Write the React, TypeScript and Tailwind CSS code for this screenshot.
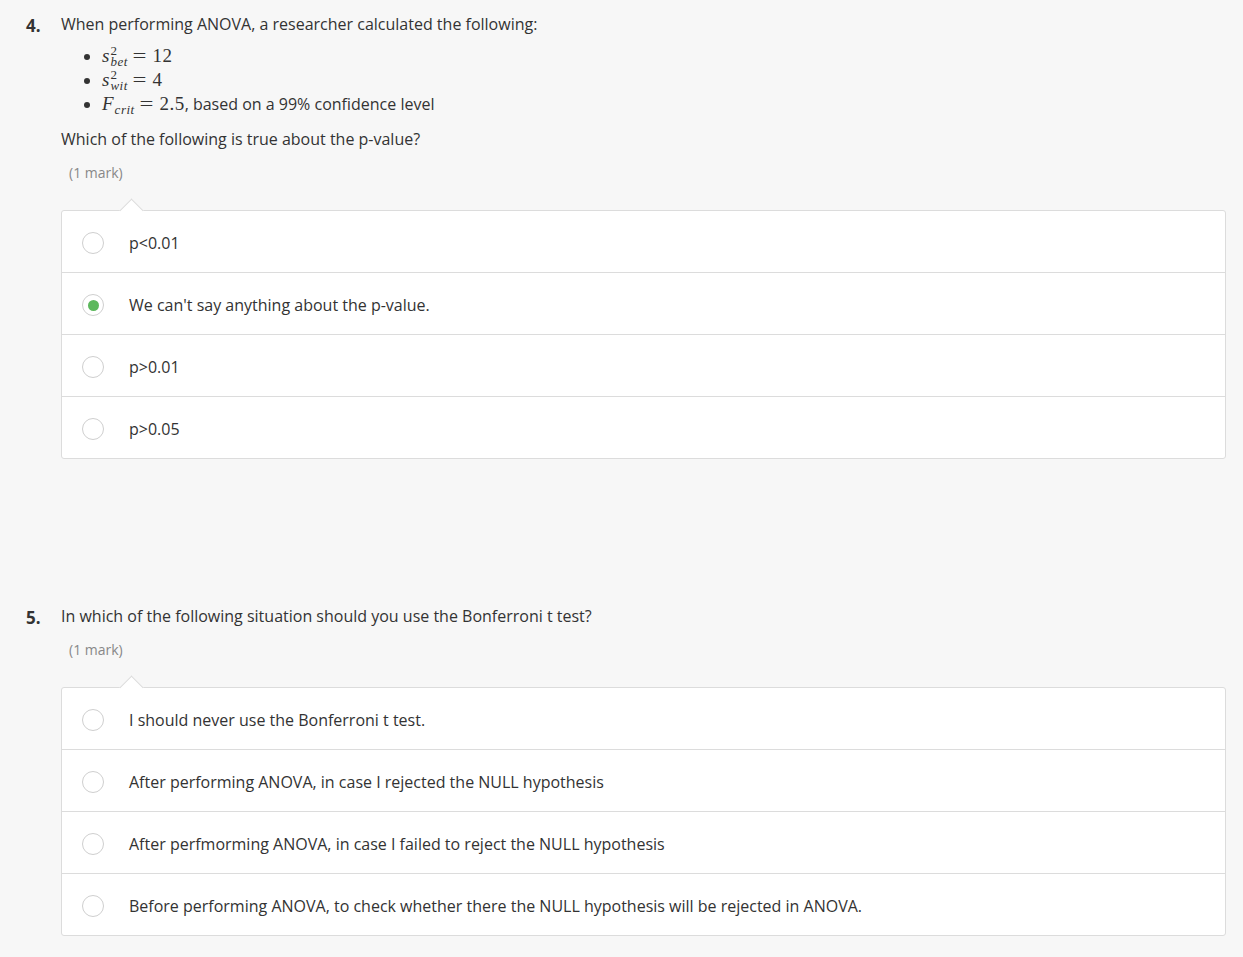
import type { ReactNode } from "react";

type Question = {
  number: number;
  title: ReactNode;
  options: string[];
  selected?: number;
};

function Sub({ sup, sub }: { sup?: string; sub: string }) {
  return (
    <span className="inline-flex flex-col leading-[11px] text-[13px] align-[7px] ml-[1px]">
      <span className="not-italic">{sup ?? "\u00a0"}</span>
      <span className="italic tracking-[0.5px]">{sub}</span>
    </span>
  );
}

function MathLine({ v, sup, sub, value }: { v: string; sup?: string; sub: string; value: string }) {
  return (
    <span className="font-['Liberation_Serif',serif] text-[19px] leading-6">
      <span className="italic">{v}</span>
      <Sub sup={sup} sub={sub} />
      <span className="ml-[6px] mr-[8px] inline-block scale-x-[1.3]">=</span>
      <span className="tracking-[0.5px]">{value}</span>
    </span>
  );
}

const questions: Question[] = [
  {
    number: 4,
    title: (
      <>
        <p>When performing ANOVA, a researcher calculated the following:</p>
        <ul className="list-disc pl-[41px] mt-2">
          <li className="h-6">
            <MathLine v="s" sup="2" sub="bet" value="12" />
          </li>
          <li className="h-6">
            <MathLine v="s" sup="2" sub="wit" value="4" />
          </li>
          <li className="h-6">
            <MathLine v="F" sub="crit" value="2.5" />, based on a 99% confidence level
          </li>
        </ul>
        <p className="mt-[11px]">Which of the following is true about the p-value?</p>
      </>
    ),
    options: ["p<0.01", "We can't say anything about the p-value.", "p>0.01", "p>0.05"],
    selected: 1,
  },
  {
    number: 5,
    title: <p>In which of the following situation should you use the Bonferroni t test?</p>,
    options: [
      "I should never use the Bonferroni t test.",
      "After performing ANOVA, in case I rejected the NULL hypothesis",
      "After perfmorming ANOVA, in case I failed to reject the NULL hypothesis",
      "Before performing ANOVA, to check whether there the NULL hypothesis will be rejected in ANOVA.",
    ],
  },
];

function Radio({ checked }: { checked: boolean }) {
  return (
    <span className="mt-[2px] flex h-[22px] w-[22px] shrink-0 items-center justify-center rounded-full border border-[#cfcfcf] bg-white">
      {checked && <span className="h-[11px] w-[11px] rounded-full bg-[#5cb85c]" />}
    </span>
  );
}

function QuestionBlock({ q }: { q: Question }) {
  return (
    <div className="flex">
      <div className="w-[35px] shrink-0 text-[17px] font-bold leading-6 pt-[2px] text-[#333]">{q.number}.</div>
      <div className="flex-1">
        <div className="text-[16px] leading-6 text-[#333]">{q.title}</div>
        <div className="mt-3 pl-2 text-[14px] leading-5 text-[#888]">(1 mark)</div>
        <div className="relative mt-[27px] rounded-[3px] border border-[#dcdcdc] bg-white">
          <div className="absolute -top-[9px] left-[61px] h-[17px] w-[17px] rotate-45 border-l border-t border-[#dcdcdc] bg-white" />
          {q.options.map((opt, i) => (
            <div
              key={opt}
              className={`relative flex items-start gap-[25px] pl-[20px] pt-[19px] ${
                i < q.options.length - 1 ? "h-[62px] border-b border-[#dcdcdc]" : "h-[61px]"
              }`}
            >
              <Radio checked={q.selected === i} />
              <span className="pt-[1px] text-[16px] leading-6 text-[#333]">{opt}</span>
            </div>
          ))}
        </div>
      </div>
    </div>
  );
}

export default function App() {
  return (
    <div className="min-h-screen bg-[#f7f7f7] pl-[26px] pr-[17px] pt-[12px] font-['Open_Sans',sans-serif]">
      <QuestionBlock q={questions[0]} />
      <div className="h-[145px]" />
      <QuestionBlock q={questions[1]} />
    </div>
  );
}
